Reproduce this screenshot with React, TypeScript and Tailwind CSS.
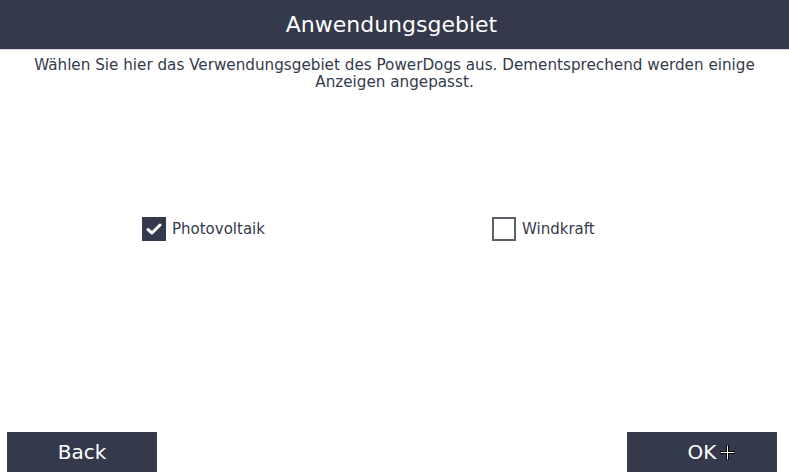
import React from "react";

export default function App() {
  const font = { fontFamily: '"DejaVu Sans", sans-serif' };
  return (
    <div className="relative w-[789px] h-[474px] bg-white flex flex-col overflow-hidden" style={font}>
      <div className="h-[49px] bg-[#343a4b] flex items-center justify-center pr-[6px] text-white text-[22px]">
        Anwendungsgebiet
      </div>
      <div className="h-px bg-[#d3d6df]" />
      <p className="mt-[7px] px-[16px] text-center text-[15.2px] leading-[17px] text-[#343a4b]">
        Wählen Sie hier das Verwendungsgebiet des PowerDogs aus. Dementsprechend werden einige Anzeigen angepasst.
      </p>
      <div className="mt-[126px] flex pl-[142px]">
        <div className="w-[350px] flex items-center gap-[6px]">
          <div className="w-[24px] h-[24px] bg-[#343a4b] flex items-center justify-center">
            <svg width="16" height="14" viewBox="0 0 16 14">
              <path d="M2 7.5 L6 11 L14 3" fill="none" stroke="white" strokeWidth="3" strokeLinecap="round" strokeLinejoin="round" />
            </svg>
          </div>
          <span className="text-[15px] text-[#343a4b]">Photovoltaik</span>
        </div>
        <div className="flex items-center gap-[6px]">
          <div className="w-[24px] h-[24px] border-2 border-[#5a5f6c] bg-white" />
          <span className="text-[15px] text-[#343a4b]">Windkraft</span>
        </div>
      </div>
      <div className="mt-auto mb-[2px] flex justify-between pl-[7px] pr-[12px]">
        <button className="w-[150px] h-[40px] bg-[#343a4b] text-white text-[20px] flex items-center justify-center" style={font}>
          Back
        </button>
        <button className="w-[150px] h-[40px] bg-[#343a4b] text-white text-[20px] flex items-center justify-center" style={font}>
          OK
        </button>
      </div>
      <svg className="absolute left-[719px] top-[444px]" width="17" height="17" viewBox="0 0 17 17">
        <path d="M8.5 1 V16 M1 8.5 H16" stroke="black" strokeWidth="3" />
        <path d="M8.5 1.5 V15.5 M1.5 8.5 H15.5" stroke="white" strokeWidth="1" />
      </svg>
    </div>
  );
}
